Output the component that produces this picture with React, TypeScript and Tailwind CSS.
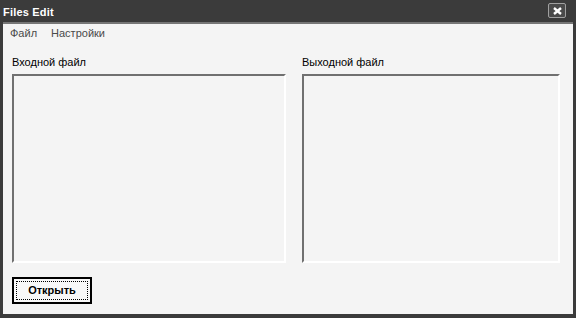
const font = { fontFamily: '"Liberation Sans", Arial, sans-serif' }

/** Sunken 3D group panel used for the file views. */
function FilePanel({ label, width }: { label: string; width: string }) {
  return (
    <div className={`flex flex-col ${width}`}>
      <div className="h-[21px] text-[11px] leading-[14px] text-black pt-[2px]">{label}</div>
      <div className="h-[189px] border-2 border-t-[#707070] border-l-[#707070] border-b-[#ffffff] border-r-[#ffffff] bg-[#f4f4f4]" />
    </div>
  )
}

export default function App() {
  return (
    <div
      className="w-[576px] h-[318px] bg-[#3b3b3b] flex flex-col px-[3px] pb-[4px] overflow-hidden"
      style={font}
    >
      {/* title bar */}
      <div className="h-[24px] flex items-start justify-between pt-[3px] border-b-2 border-[#767676]">
        <span className="text-white font-bold text-[11px] leading-[14px] pt-[2px] tracking-[0.2px]">Files Edit</span>
        <div className="w-[18px] h-[15px] mr-[7px] bg-[#4a4a4a] border border-[#a0a0a0] rounded-[2px] flex items-center justify-center">
          <svg width="9" height="8" viewBox="0 0 9 8">
            <path d="M1 1 L8 7 M8 1 L1 7" stroke="#ffffff" strokeWidth="2.4" />
          </svg>
        </div>
      </div>

      {/* client area */}
      <div className="flex-1 bg-[#f4f4f4] flex flex-col">
        <div className="h-[18px] flex items-center gap-[14px] pl-[7px] text-[11px] text-[#4a4a4a]">
          <span>Файл</span>
          <span>Настройки</span>
        </div>
        <div className="flex gap-[16px] pl-[9px] pt-[11px]">
          <FilePanel label="Входной файл" width="w-[274px]" />
          <FilePanel label="Выходной файл" width="w-[258px]" />
        </div>
        <div className="pl-[9px] pt-[14px]">
          <button className="w-[80px] h-[27px] border-2 border-black bg-[#f8f8f8] p-[2px] flex">
            <span className="flex-1 border border-dotted border-black flex items-center justify-center text-[11px] font-bold text-black leading-none">
              Открыть
            </span>
          </button>
        </div>
      </div>
    </div>
  )
}
